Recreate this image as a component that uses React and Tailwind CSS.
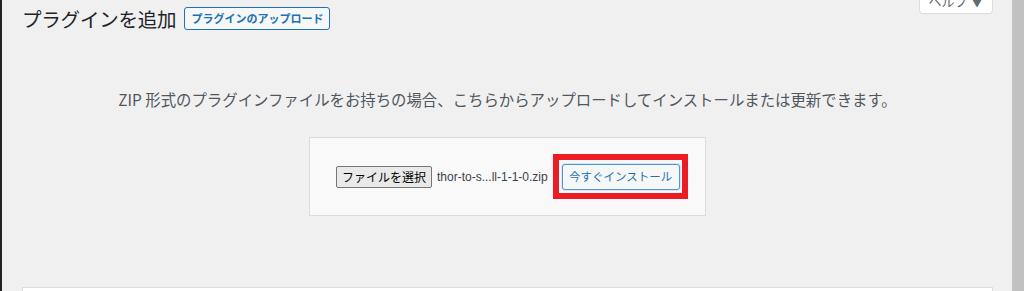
import React from 'react';

const jp = { fontFamily: '"Noto Sans CJK JP", "Noto Sans", sans-serif' };

const App = () => {
  return (
    <div className="flex w-[1024px] h-[291px] overflow-hidden bg-[#f0f0f1]" style={jp}>
      {/* admin menu edge */}
      <div className="w-[2px] bg-[#1d2327]" />

      <div className="flex-1 flex flex-col min-w-0">
        {/* admin bar edge */}
        <div className="h-[4px] bg-[#23282d] relative z-10" />

        <div className="relative flex-1 pl-[20px] pr-[19px]">
          {/* help tab */}
          <div className="absolute right-[19px] top-[-10px] w-[74px] h-[24px] flex items-end justify-center pb-[6px] bg-white border border-[#dcdcde] rounded-b-[4px] text-[13px] leading-none text-[#646970]">
            ヘルプ ▼
          </div>

          {/* header */}
          <div className="flex items-center gap-[8px] pt-[7px]">
            <h1 className="text-[19.5px] leading-none font-normal text-[#1d2327] tracking-[-0.2px]">
              プラグインを追加
            </h1>
            <button
              type="button"
              className="h-[23px] px-[6px] border border-[#2271b1] rounded-[3px] bg-[#f6f7f7] text-[#2271b1] text-[11px] font-semibold leading-none"
            >
              プラグインのアップロード
            </button>
          </div>

          {/* description */}
          <p className="mt-[58px] text-center text-[15.4px] leading-[22px] text-[#50575e]">
            ZIP 形式のプラグインファイルをお持ちの場合、こちらからアップロードしてインストールまたは更新できます。
          </p>

          {/* upload form */}
          <div className="mt-[27px] mx-auto w-[397px] h-[79px] border border-[#dcdcde] bg-[#f9f9f9] flex items-center pl-[26px]">
            <button
              type="button"
              className="h-[22px] w-[96px] border border-[#767676] rounded-[2px] bg-[#e9e9e9] text-[12px] leading-none text-black"
            >
              ファイルを選択
            </button>
            <span
              className="ml-[5px] text-[12px] text-[#3c434a]"
              style={{ fontFamily: '"Liberation Sans", Arial, sans-serif' }}
            >
              thor-to-s...ll-1-1-0.zip
            </span>
            <div className="ml-[5px] w-[135px] h-[45px] border-[6px] border-[#ed1c24] flex items-center pl-[3px]">
              <button
                type="button"
                className="h-[26px] w-[118px] border border-[#4f94d4] rounded-[3px] bg-[#f6f7f7] text-[#2271b1] text-[11.5px] leading-none shadow-[0_0_0_1px_#d4e6f5]"
              >
                今すぐインストール
              </button>
            </div>
          </div>

          {/* next panel */}
          <div className="mt-[71px] h-[40px] bg-white border border-[#dcdcde]" />
        </div>
      </div>

      {/* scrollbar */}
      <div className="w-[12px] bg-[#c1c1c1]" />
    </div>
  );
};

export default App;
